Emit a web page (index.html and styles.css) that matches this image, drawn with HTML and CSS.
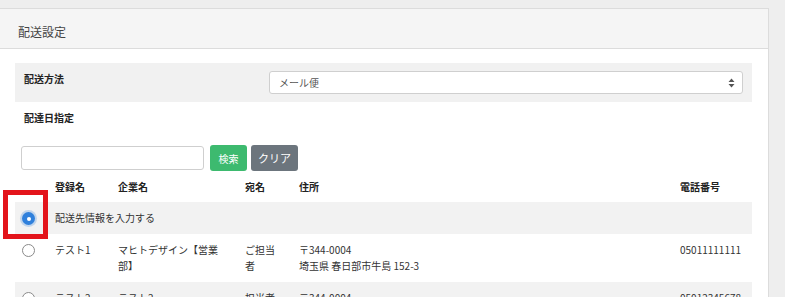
FILE: index.html
```html
<!DOCTYPE html>
<html lang="ja">
<head>
<meta charset="utf-8">
<title>配送設定</title>
<link rel="stylesheet" href="styles.css">
</head>
<body>
<div class="page">
  <div class="card">
    <div class="card-header">配送設定</div>
    <div class="card-body">
      <div class="form-row shaded">
        <div class="form-label">配送方法</div>
        <div class="select">
          <span>メール便</span>
          <svg class="arrows" width="7" height="10" viewBox="0 0 7 10"><path d="M3.5 0.5 L6.5 4 L0.5 4 Z M3.5 9.5 L6.5 6 L0.5 6 Z" fill="#555"/></svg>
        </div>
      </div>
      <div class="form-row plain">
        <div class="form-label">配達日指定</div>
      </div>
      <div class="search">
        <div class="input"></div>
        <button class="btn btn-green">検索</button>
        <button class="btn btn-gray">クリア</button>
      </div>
      <div class="table">
        <div class="tr head">
          <div class="td"></div>
          <div class="td">登録名</div>
          <div class="td">企業名</div>
          <div class="td">宛名</div>
          <div class="td">住所</div>
          <div class="td">電話番号</div>
        </div>
        <div class="tr shaded">
          <div class="td radio-cell"><span class="radio checked"></span></div>
          <div class="td span5">配送先情報を入力する</div>
        </div>
        <div class="tr">
          <div class="td radio-cell"><span class="radio"></span></div>
          <div class="td">テスト1</div>
          <div class="td c2">マヒトデザイン【営業部】</div>
          <div class="td c3">ご担当者</div>
          <div class="td">〒344-0004<br>埼玉県 春日部市牛島 152-3</div>
          <div class="td">05011111111</div>
        </div>
        <div class="tr shaded">
          <div class="td radio-cell"><span class="radio"></span></div>
          <div class="td">テスト2</div>
          <div class="td c2">テスト2</div>
          <div class="td c3">担当者</div>
          <div class="td">〒344-0004<br>埼玉県 春日部市牛島 152-3</div>
          <div class="td">05012345678</div>
        </div>
      </div>
    </div>
  </div>
  <div class="highlight"></div>
</div>
</body>
</html>
```

FILE: styles.css
```css
html, body {
  margin: 0;
  padding: 0;
  height: 100%;
  overflow: hidden;
  background: #eeeeee;
}
body {
  font-family: "Noto Sans CJK JP", "Noto Sans", sans-serif;
  font-size: 10px;
  color: #333;
}
.page {
  position: relative;
  padding: 8px 16px 0 0;
}
.card {
  background: #fff;
  border-top: 1px solid #dcdcdc;
  border-right: 1px solid #dcdcdc;
  box-sizing: border-box;
  width: 769px;
}
.card-header {
  background: #f5f5f5;
  border-bottom: 1px solid #dcdcdc;
  padding: 15px 18px 8px;
  font-size: 12px;
  line-height: 16px;
  color: #444;
}
.card-body {
  padding: 14px 16px 0 15px;
}
.form-row {
  display: flex;
  align-items: flex-start;
}
.form-row.shaded {
  background: #f1f1f1;
  padding: 8px 9px;
}
.form-row.plain {
  padding: 8px 9px;
}
.form-label {
  width: 245px;
  font-weight: bold;
  color: #222;
  line-height: 16px;
}
.select {
  flex: 1;
  height: 23px;
  box-sizing: border-box;
  border: 1px solid #cfcfcf;
  border-radius: 3px;
  background: #fff;
  display: flex;
  align-items: center;
  justify-content: space-between;
  padding: 0 7px 0 9px;
  color: #555;
  line-height: 16px;
}
.arrows {
  display: block;
}
.search {
  display: flex;
  align-items: center;
  gap: 4px;
  padding: 11px 0 0 6px;
}
.input {
  width: 183px;
  height: 24px;
  box-sizing: border-box;
  border: 1px solid #cfcfcf;
  border-radius: 3px;
  background: #fff;
  margin-right: 2px;
}
.btn {
  height: 26px;
  border: none;
  border-radius: 3px;
  color: #fff;
  font-family: inherit;
  font-size: 10px;
  padding: 0;
  cursor: pointer;
}
.btn-green {
  width: 37px;
  background: #3dba6f;
}
.btn-gray {
  width: 47px;
  background: #6c757d;
  font-size: 11px;
}
.table {
  display: flex;
  flex-direction: column;
}
.tr {
  display: grid;
  grid-template-columns: 40px 63px 127px 54px 381px 1fr;
  line-height: 16px;
  padding: 8px 0;
}
.tr.head {
  padding: 8px 0 7px;
  font-weight: bold;
  color: #222;
}
.tr.shaded {
  background: #f2f2f2;
}
.td.c2 {
  padding-right: 20px;
}
.td.c3 {
  padding-right: 16px;
}
.td.span5 {
  grid-column: 2 / span 5;
}
.radio-cell {
  display: flex;
  align-items: flex-start;
  padding-left: 7px;
  padding-top: 2px;
}
.radio {
  width: 13px;
  height: 13px;
  box-sizing: border-box;
  border-radius: 50%;
  border: 1px solid #8a8a8a;
  background: #fff;
  display: block;
}
.radio.checked {
  border: none;
  background: #2f80dc;
  box-shadow: 0 0 0 2px rgba(47, 128, 220, 0.25);
  position: relative;
}
.radio.checked::after {
  content: "";
  position: absolute;
  left: 4.5px;
  top: 4.5px;
  width: 4px;
  height: 4px;
  border-radius: 50%;
  background: #fff;
}
.highlight {
  position: absolute;
  left: 3px;
  top: 190px;
  width: 45px;
  height: 49px;
  box-sizing: border-box;
  border: 5px solid #e3141b;
}
```
